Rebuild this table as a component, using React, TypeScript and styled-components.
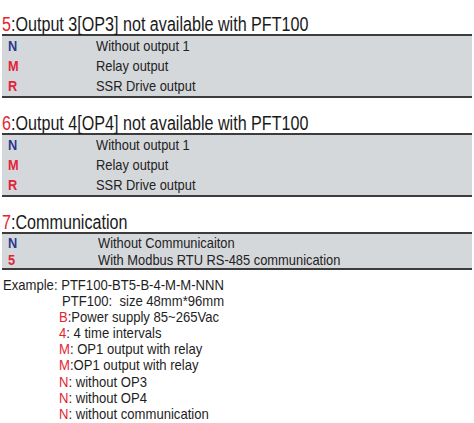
import React from "react";
import styled, { createGlobalStyle } from "styled-components";

const GlobalStyle = createGlobalStyle`
  body {
    margin: 0;
    background: #ffffff;
    font-family: "Liberation Sans", Arial, sans-serif;
    color: #1e1e1e;
  }
`;

interface Option {
  code: string;
  tone: "blue" | "red";
  text: string;
}

interface Section {
  num: string;
  title: string;
  rowHeight: number;
  textIndent: number;
  options: Option[];
}

const sections: Section[] = [
  {
    num: "5",
    title: "Output 3[OP3] not available with PFT100",
    rowHeight: 20,
    textIndent: 88,
    options: [
      { code: "N", tone: "blue", text: "Without output 1" },
      { code: "M", tone: "red", text: "Relay output" },
      { code: "R", tone: "red", text: "SSR Drive output" },
    ],
  },
  {
    num: "6",
    title: "Output 4[OP4] not available with PFT100",
    rowHeight: 20,
    textIndent: 88,
    options: [
      { code: "N", tone: "blue", text: "Without output 1" },
      { code: "M", tone: "red", text: "Relay output" },
      { code: "R", tone: "red", text: "SSR Drive output" },
    ],
  },
  {
    num: "7",
    title: "Communication",
    rowHeight: 17,
    textIndent: 90,
    options: [
      { code: "N", tone: "blue", text: "Without Communicaiton" },
      { code: "5", tone: "red", text: "With Modbus RTU RS-485 communication" },
    ],
  },
];

// red key, separator, rest of the line
const exampleLines = [
  { key: "B", sep: ":", text: "Power supply 85~265Vac" },
  { key: "4", sep: ": ", text: "4 time intervals" },
  { key: "M", sep: ": ", text: "OP1 output with relay" },
  { key: "M", sep: ":", text: "OP1 output with relay" },
  { key: "N", sep: ": ", text: "without OP3" },
  { key: "N", sep: ": ", text: "without OP4" },
  { key: "N", sep: ": ", text: "without communication" },
];

const App: React.FC = () => {
  return (
    <Page>
      <GlobalStyle />
      {sections.map((s) => (
        <Block key={s.num}>
          <Title>
            <Narrow $k={0.806}>
              <Num>{s.num}</Num>:{s.title}
            </Narrow>
          </Title>
          <Table>
            {s.options.map((o, i) => (
              <Row key={i} $h={s.rowHeight}>
                <Code $tone={o.tone}>
                  <Narrow $k={0.85}>{o.code}</Narrow>
                </Code>
                <Desc $indent={s.textIndent}>
                  <Narrow $k={0.888}>{o.text}</Narrow>
                </Desc>
              </Row>
            ))}
          </Table>
        </Block>
      ))}

      <Example>
        <ExLine>
          <Narrow $k={0.872}>Example: PTF100-BT5-B-4-M-M-NNN</Narrow>
        </ExLine>
        <ExLine $indent={59}>
          <Narrow $k={0.872}>PTF100:  size 48mm*96mm</Narrow>
        </ExLine>
        {exampleLines.map((l, i) => (
          <ExLine key={i} $indent={56}>
            <Narrow $k={0.872}>
              <RedKey>{l.key}</RedKey>
              {l.sep}
              {l.text}
            </Narrow>
          </ExLine>
        ))}
      </Example>
    </Page>
  );
};

export default App;

const Page = styled.div`
  width: 470px;
  padding: 15px 2px 0 2px;
`;

const Narrow = styled.span<{ $k: number }>`
  display: inline-block;
  white-space: pre;
  transform: scaleX(${(p) => p.$k});
  transform-origin: left center;
`;

const Block = styled.section`
  & + & {
    margin-top: 16px;
  }
`;

const Title = styled.div`
  font-size: 20px;
  line-height: 19px;
  height: 19px;
  color: #1a1a1a;
  white-space: nowrap;
`;

const Num = styled.span`
  color: #e4252f;
`;

const Table = styled.div`
  background: #d5d8db;
  border-top: 2px solid #3c3c3c;
  border-bottom: 2px solid #3c3c3c;
`;

const Row = styled.div<{ $h: number }>`
  display: flex;
  align-items: center;
  height: ${(p) => p.$h}px;
  padding-left: 6px;
  font-size: 14.5px;
  line-height: 16px;
`;

const Code = styled.span<{ $tone: "blue" | "red" }>`
  width: 0;
  font-size: 15px;
  font-weight: bold;
  color: ${(p) => (p.$tone === "blue" ? "#2c3a8e" : "#e2233a")};
`;

const Desc = styled.span<{ $indent: number }>`
  margin-left: ${(p) => p.$indent}px;
  color: #222;
  white-space: nowrap;
`;

const Example = styled.div`
  display: flex;
  flex-direction: column;
  margin-top: 7px;
  padding-left: 1px;
  font-size: 15px;
  line-height: 16.1px;
  color: #1e1e1e;
`;

const ExLine = styled.div<{ $indent?: number }>`
  padding-left: ${(p) => p.$indent ?? 0}px;
  white-space: pre;
`;

const RedKey = styled.span`
  color: #e4252f;
`;
